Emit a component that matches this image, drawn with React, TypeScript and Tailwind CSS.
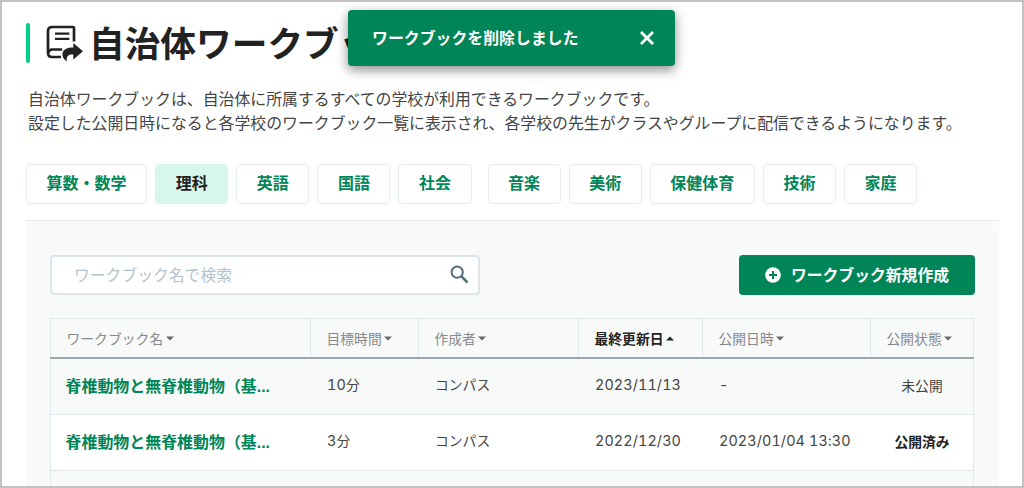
import { useState } from 'react';

const subjects = [
    ['算数・数学', '理科', '英語', '国語', '社会'],
    ['音楽', '美術', '保健体育', '技術', '家庭'],
];

const columns = [
    { key: 'name', label: 'ワークブック名' },
    { key: 'goal', label: '目標時間' },
    { key: 'author', label: '作成者' },
    { key: 'updated', label: '最終更新日' },
    { key: 'published', label: '公開日時' },
    { key: 'status', label: '公開状態' },
];

const rows = [
    { name: '脊椎動物と無脊椎動物（基...', goal: '10', author: 'コンパス', updated: '2023/11/13', published: '-', status: '未公開' },
    { name: '脊椎動物と無脊椎動物（基...', goal: '3', author: 'コンパス', updated: '2022/12/30', published: '2023/01/04 13:30', status: '公開済み' },
];

const grid = 'grid grid-cols-[260px_108px_160px_124px_168px_102px]';
const digits = "font-['Inter','Noto_Sans_CJK_JP',sans-serif] text-[14.4px] tabular-nums tracking-[0.1px]";

function WorkbookIcon() {
    return (
        <svg className="ml-[16px] mt-[2px] h-[37px] w-[37px] shrink-0" viewBox="0 0 37 37" fill="none">
            <path d="M28 16.5V3.2c0-.8-.4-1.2-1.2-1.2H6.2C3.4 2 2 3.4 2 6.2v21.6c0 2.8 1.2 4.2 4 4.2h9" stroke="#222" strokeWidth="2.7" />
            <path d="M2.6 28c0-2.3 1.3-3.4 3.6-3.4h10" stroke="#222" strokeWidth="2.5" />
            <path d="M9 8.7h14.4M9 13.9h14.4" stroke="#222" strokeWidth="2.3" />
            <path d="M27.3 18.1 37 26.3l-9.7 8.2v-5c-4.2-.3-7.6 1.2-6.3 7-3.5-2.1-5-5-4.5-8 .7-4.1 4.8-6 10.8-6z" fill="#222" />
        </svg>
    );
}

function Toast({ onClose }: { onClose: () => void }) {
    return (
        <div className="absolute left-[346px] top-[8px] flex h-[56px] w-[327px] items-center justify-between rounded-[4px] bg-[#008558] pl-[24px] pr-[20px] shadow-[0_4px_12px_rgba(0,0,0,0.45)]">
            <span className="text-[15.9px] font-bold leading-6 text-white">ワークブックを削除しました</span>
            <button onClick={onClose}>
                <svg className="h-4 w-4" viewBox="0 0 16 16">
                    <path d="M2 2l12 12M14 2L2 14" stroke="#fff" strokeWidth="2.8" />
                </svg>
            </button>
        </div>
    );
}

function SortArrow({ up }: { up: boolean }) {
    return (
        <svg className="ml-[2.5px] h-[5px] w-2 shrink-0" viewBox="0 0 8 5">
            {up ? <path d="M0 4.5h8L4 .5z" fill="#222" /> : <path d="M0 .5h8l-4 4z" fill="#666" />}
        </svg>
    );
}

export default function App() {
    const [subject, setSubject] = useState('理科');
    const [toast, setToast] = useState(true);

    return (
        <div className="relative h-[488px] w-[1024px] overflow-hidden border-2 border-[#c2c2c2] bg-white font-['Noto_Sans_CJK_JP',sans-serif] text-[#222]">
            <header className="flex h-[60px] pl-[24px] pt-[21px]">
                <div className="h-[40px] w-[4px] shrink-0 rounded-full bg-[#00cf86]" />
                <WorkbookIcon />
                <h1 className="ml-[6px] -mt-px whitespace-nowrap text-[35.7px] font-bold leading-[40px]">自治体ワークブック</h1>
            </header>

            <p className="mt-[25px] whitespace-nowrap pl-[26px] text-[15.89px] leading-[24px] text-[#444]">
                自治体ワークブックは、自治体に所属するすべての学校が利用できるワークブックです。
                <br />
                設定した公開日時になると各学校のワークブック一覧に表示され、各学校の先生がクラスやグループに配信できるようになります。
            </p>

            <nav className="ml-[24px] mt-[29px] flex gap-[16px]">
                {subjects.map((group) => (
                    <div key={group[0]} className="flex gap-[8px]">
                        {group.map((s) => (
                            <button
                                key={s}
                                onClick={() => setSubject(s)}
                                className={`h-[40px] rounded-[4px] border px-[19.55px] pb-[5px] text-[16px] font-bold leading-6 ${
                                    s === subject ? 'border-[#d8f7ec] bg-[#d8f7ec] text-[#222]' : 'border-[#e5edf0] bg-white text-[#008558]'
                                }`}
                            >
                                {s}
                            </button>
                        ))}
                    </div>
                ))}
            </nav>

            <main className="ml-[24px] mt-[16px] h-[270px] w-[973px] border-t border-[#e1e9ea] bg-[#f8fafa] px-[24px]">
                <div className="-mx-[24px] h-[15px] bg-[#fafafa]" />
                <div className="mt-[18px] flex h-[41px] items-center justify-between">
                    <div className="flex h-[40px] w-[430px] items-center rounded-[4px] border-2 border-[#dce6ea] bg-white pl-[22px] pr-[9px]">
                        <input
                            type="text"
                            placeholder="ワークブック名で検索"
                            className="min-w-0 flex-1 text-[15.8px] leading-6 outline-none placeholder:text-[#b4c2ca]"
                        />
                        <svg className="h-[19px] w-[19px]" viewBox="0 0 19 19" fill="none" stroke="#546e7a">
                            <circle cx="7.2" cy="7.2" r="5.6" strokeWidth="2" />
                            <path d="M11.2 11.2l6.3 6.3" strokeWidth="2.5" />
                        </svg>
                    </div>
                    <button className="flex h-[40px] w-[236px] items-center rounded-[4px] bg-[#008558] pl-[26px] text-[15.8px] font-bold leading-6 text-white">
                        <svg className="mr-[10px] h-[16px] w-[16px]" viewBox="0 0 16 16">
                            <circle cx="8" cy="8" r="7.8" fill="#fff" />
                            <path d="M8 4v8M4 8h8" stroke="#008558" strokeWidth="2" />
                        </svg>
                        ワークブック新規作成
                    </button>
                </div>

                <div className="mt-[23px] w-[924px] border border-[#dfe9ec] text-[13.8px] leading-5">
                    <div className={`${grid} -mx-px h-[40px] border-b-2 border-[#98a7b0] pl-px text-[#888]`}>
                        {columns.map((c) => (
                            <div
                                key={c.key}
                                className={`flex items-center border-r border-[#dfe9ec] pl-[15.5px] last:border-r-0 ${c.key === 'updated' ? 'font-bold text-[#222]' : ''}`}
                            >
                                {c.label}
                                <SortArrow up={c.key === 'updated'} />
                            </div>
                        ))}
                    </div>
                    {rows.map((r) => (
                        <div
                            key={r.updated}
                            className={`${grid} h-[56px] items-center whitespace-nowrap border-b border-[#dfe9ec] pb-[4px] text-[#444] even:bg-[#f8fafa] odd:bg-white`}
                        >
                            <a href="#" className="pl-[14.5px] pt-[5px] font-['Liberation_Sans','Noto_Sans_CJK_JP',sans-serif] text-[15.95px] font-bold text-[#008558]">{r.name}</a>
                            <span className="pl-[16px]">
                                <span className={digits}>{r.goal}</span>分
                            </span>
                            <span className="pb-[2px] pl-[16px]">{r.author}</span>
                            <span className={`pl-[16px] ${digits}`}>{r.updated}</span>
                            <span className={`pl-[16px] ${digits}`}>{r.published}</span>
                            <span className={`pt-px text-center ${r.status === '公開済み' ? 'font-bold text-[#222]' : ''}`}>{r.status}</span>
                        </div>
                    ))}
                    <div className="h-[56px] bg-[#f8fafa]" />
                </div>
            </main>

            {toast && <Toast onClose={() => setToast(false)} />}
        </div>
    );
}
